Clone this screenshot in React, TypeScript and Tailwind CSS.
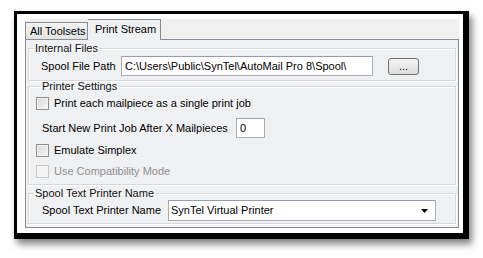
import React from "react";

const font = "font-['Liberation_Sans','Arial',sans-serif]";

function Check({ label, disabled = false }: { label: string; disabled?: boolean }) {
  return (
    <div className="flex items-center h-[13px] gap-[5px]">
      <span
        className={
          disabled
            ? "w-[13px] h-[13px] border border-[#c8c8c8] bg-[#f4f4f4]"
            : "w-[13px] h-[13px] border border-[#8e8f8f] bg-gradient-to-br from-[#d8d8d8] to-[#f7f7f7] shadow-[inset_0_0_0_1px_#f4f4f4]"
        }
      />
      <span className={disabled ? "text-[#8f8f8f] leading-[13px]" : "text-black leading-[13px]"}>{label}</span>
    </div>
  );
}

function Group({
  title,
  className,
  children,
}: {
  title: string;
  className: string;
  children: React.ReactNode;
}) {
  return (
    <fieldset className={`mx-[2px] border border-[#d5d9dc] shadow-[inset_1px_1px_0_#ffffff,1px_1px_0_#ffffff] ${className}`}>
      <legend className="ml-[5px] px-[1px] leading-[11px] text-[#111]">{title}</legend>
      {children}
    </fieldset>
  );
}

export default function App() {
  return (
    <div className={`w-[483px] h-[258px] bg-white text-[11px] text-black ${font}`}>
      <div className="ml-[14px] mt-[11px] w-[455px] h-[228px] border-t-[3px] border-l-[3px] border-r-[6px] border-b-[6px] border-black bg-white pl-[8px] pt-[5px] pr-[4px] pb-[5px] flex flex-col shadow-[3px_5px_7px_rgba(0,0,0,0.5)]">
        {/* tab strip */}
        <div className="h-[20px] flex items-end bg-[#f0f0f0]">
          <div className="w-[63px] h-[17px] border border-b-0 border-[#898c95] bg-gradient-to-b from-[#f2f2f2] to-[#e3e3e3] pl-[4px] leading-[16px]">
            All Toolsets
          </div>
          <div className="w-[73px] h-[21px] -mb-px relative z-10 border border-b-0 border-l-0 border-[#898c95] bg-[#eff0f2] pl-[7px] leading-[18px]">
            Print Stream
          </div>
        </div>

        {/* tab page */}
        <div className="flex-1 border border-[#898c95] bg-[#eff0f2] flex flex-col">
          <Group title="Internal Files" className="mt-[3px] pb-[4px]">
            <div className="mt-[2px] flex items-center pl-[12px]">
              <span className="w-[80px]">Spool File Path</span>
              <div className="w-[252px] h-[20px] border border-[#abadb3] border-t-[#9a9da5] bg-white pl-[3px] leading-[18px] whitespace-nowrap">
                C:\Users\Public\SynTel\AutoMail Pro 8\Spool\
              </div>
              <div className="ml-[15px] w-[31px] h-[17px] rounded-[3px] border border-[#707070] bg-gradient-to-b from-[#f4f4f4] to-[#dedede] flex items-center justify-center leading-[10px]">
                ...
              </div>
            </div>
          </Group>

          <Group title="Printer Settings" className="pl-[7px] pb-[6px]">
            <div className="mt-[5px]">
              <Check label="Print each mailpiece as a single print job" />
            </div>
            <div className="mt-[8px] flex items-center pl-[6px]">
              <span className="w-[194px]">Start New Print Job After X Mailpieces</span>
              <div className="w-[29px] h-[20px] border border-[#abadb3] border-t-[#9a9da5] bg-white pl-[3px] leading-[18px]">
                0
              </div>
            </div>
            <div className="mt-[6px]">
              <Check label="Emulate Simplex" />
            </div>
            <div className="mt-[8px]">
              <Check label="Use Compatibility Mode" disabled />
            </div>
          </Group>

          <Group title="Spool Text Printer Name" className="mt-[3px] pb-[2px]">
            <div className="mt-[1px] flex items-center pl-[13px]">
              <span className="w-[126px]">Spool Text Printer Name</span>
              <div className="w-[268px] h-[21px] border border-[#abadb3] border-t-[#9a9da5] bg-white pl-[2px] flex items-center justify-between">
                <span className="leading-[19px]">SynTel Virtual Printer</span>
                <svg width="17" height="19" viewBox="0 0 17 19" className="mr-px">
                  <path d="M4 8 L11 8 L7.5 12 Z" fill="#000" />
                </svg>
              </div>
            </div>
          </Group>
        </div>
      </div>
    </div>
  );
}
